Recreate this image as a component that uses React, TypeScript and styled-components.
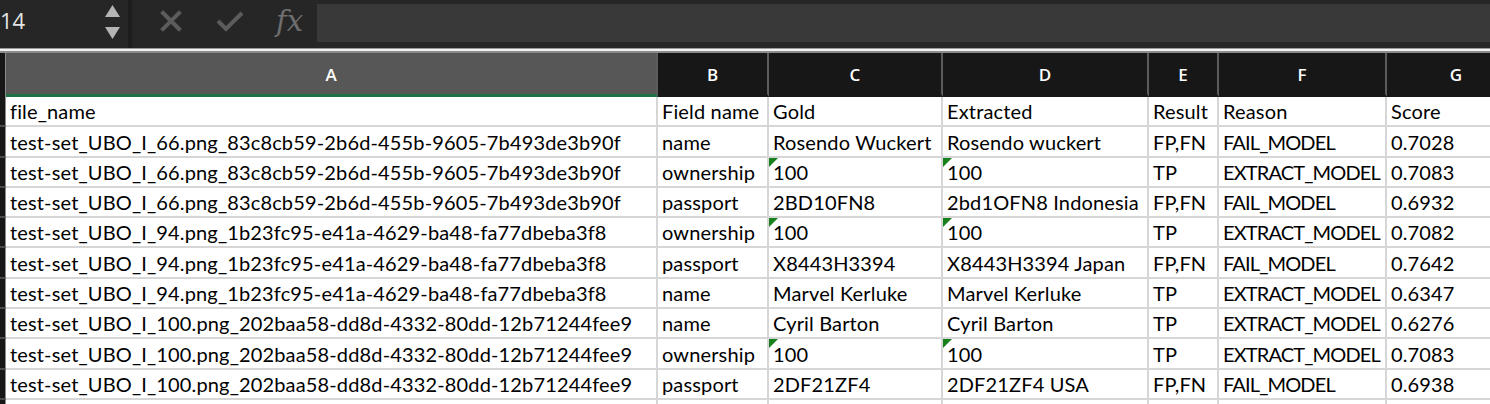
import React, { FC } from "react";
import styled, { createGlobalStyle } from "styled-components";

const GlobalStyle = createGlobalStyle`
  body {
    margin: 0;
    background: #ffffff;
    overflow: hidden;
  }
`;

const Page = styled.div`
  width: 1490px;
  height: 404px;
  overflow: hidden;
  display: flex;
  flex-direction: column;
`;

const Toolbar = styled.div`
  display: flex;
  height: 48px;
  background: #262626;
  flex-shrink: 0;
`;

const NameBox = styled.div`
  width: 128px;
  display: flex;
  align-items: center;
  justify-content: space-between;
  padding-right: 8px;
  box-sizing: border-box;
`;

const NameText = styled.span`
  font-family: "Open Sans", "Liberation Sans", sans-serif;
  font-size: 22px;
  color: #e4e4e4;
  margin-top: -8px;
`;

const Spinner = styled.div`
  display: flex;
  flex-direction: column;
  gap: 10px;
  margin-top: -4px;
`;

const Divider = styled.div`
  width: 4px;
  background: #1d1d1d;
`;

const ActionGroup = styled.div`
  display: flex;
  align-items: center;
  gap: 34px;
  padding: 0 14px 6px 28px;
`;

const FxLabel = styled.span`
  font-family: "DejaVu Serif", "Liberation Serif", serif;
  font-style: italic;
  font-size: 29px;
  color: #6e6e6e;
  margin-left: -2px;
`;

const FormulaInput = styled.div`
  flex: 1;
  margin: 4px 0 6px;
  background: #393939;
`;

const Rule = styled.div`
  height: 5px;
  flex-shrink: 0;
  background: linear-gradient(
    #9a9a9a 0,
    #9a9a9a 1px,
    #f2f2f2 1px,
    #f2f2f2 3px,
    #8c8c8c 3px
  );
`;

const columns = "6px 652px 111px 174px 206px 70px 168px 140px";

const HeaderRow = styled.div`
  display: grid;
  grid-template-columns: ${columns};
  height: 44px;
  flex-shrink: 0;
  background: #171717;
`;

const HeaderCell = styled.div<{ $selected?: boolean }>`
  display: flex;
  align-items: center;
  justify-content: center;
  box-sizing: border-box;
  border-right: 2px solid #5c5c5c;
  background: ${(p) => (p.$selected ? "#575757" : "#171717")};
  border-bottom: 3px solid ${(p) => (p.$selected ? "#1e7145" : "#171717")};
  color: #ffffff;
  font-family: "Open Sans", "Liberation Sans", sans-serif;
  font-weight: 600;
  font-size: 17px;
  padding-top: 2px;
`;

const Corner = styled.div`
  background: #171717;
  border-right: 1px solid #8a8a8a;
`;

const Row = styled.div`
  display: grid;
  grid-template-columns: ${columns};
  height: 30.3px;
  flex-shrink: 0;
`;

const RowHead = styled.div`
  background: #171717;
  box-sizing: border-box;
  border-bottom: 2px solid #4a4a4a;
  border-right: 1px solid #8a8a8a;
`;

const Cell = styled.div<{ $flag?: boolean; $caps?: boolean }>`
  position: relative;
  box-sizing: border-box;
  border-right: 2px solid #d6d6d6;
  border-bottom: 2px solid #d6d6d6;
  padding: 0 0 2px 4px;
  display: flex;
  align-items: flex-end;
  white-space: nowrap;
  overflow: hidden;
  font-family: Lato, "Liberation Sans", sans-serif;
  font-size: 20px;
  letter-spacing: ${(p) => (p.$caps ? "-0.85px" : "0.15px")};
  color: #000000;

  &::before {
    content: "";
    display: ${(p) => (p.$flag ? "block" : "none")};
    position: absolute;
    left: 0;
    top: 0;
    border-top: 9px solid #17801a;
    border-right: 9px solid transparent;
  }
`;

type Line = [string, string, string, string, string, string, string];

const f66 = "test-set_UBO_I_66.png_83c8cb59-2b6d-455b-9605-7b493de3b90f";
const f94 = "test-set_UBO_I_94.png_1b23fc95-e41a-4629-ba48-fa77dbeba3f8";
const f100 = "test-set_UBO_I_100.png_202baa58-dd8d-4332-80dd-12b71244fee9";

const lines: Line[] = [
  ["file_name", "Field name", "Gold", "Extracted", "Result", "Reason", "Score"],
  [f66, "name", "Rosendo Wuckert", "Rosendo wuckert", "FP,FN", "FAIL_MODEL", "0.7028"],
  [f66, "ownership", "100", "100", "TP", "EXTRACT_MODEL", "0.7083"],
  [f66, "passport", "2BD10FN8", "2bd1OFN8 Indonesia", "FP,FN", "FAIL_MODEL", "0.6932"],
  [f94, "ownership", "100", "100", "TP", "EXTRACT_MODEL", "0.7082"],
  [f94, "passport", "X8443H3394", "X8443H3394 Japan", "FP,FN", "FAIL_MODEL", "0.7642"],
  [f94, "name", "Marvel Kerluke", "Marvel Kerluke", "TP", "EXTRACT_MODEL", "0.6347"],
  [f100, "name", "Cyril Barton", "Cyril Barton", "TP", "EXTRACT_MODEL", "0.6276"],
  [f100, "ownership", "100", "100", "TP", "EXTRACT_MODEL", "0.7083"],
  [f100, "passport", "2DF21ZF4", "2DF21ZF4 USA", "FP,FN", "FAIL_MODEL", "0.6938"],
  ["", "", "", "", "", "", ""],
];

const letters = ["A", "B", "C", "D", "E", "F", "G"];

// numbers stored as text get the little green corner
const isFlagged = (line: Line, col: number): boolean =>
  (col === 2 || col === 3) && line[1] === "ownership";

const App: FC = () => {
  return (
    <Page>
      <GlobalStyle />
      <Toolbar>
        <NameBox>
          <NameText>14</NameText>
          <Spinner>
            <svg width="15" height="12" viewBox="0 0 15 12">
              <path d="M7.5 0 L15 12 L0 12 Z" fill="#b4b4b4" />
            </svg>
            <svg width="15" height="12" viewBox="0 0 15 12">
              <path d="M0 0 L15 0 L7.5 12 Z" fill="#b4b4b4" />
            </svg>
          </Spinner>
        </NameBox>
        <Divider />
        <ActionGroup>
          <svg width="22" height="22" viewBox="0 0 22 22">
            <path
              d="M3 3 L19 19 M19 3 L3 19"
              stroke="#5c5c5c"
              strokeWidth="4"
              strokeLinecap="square"
            />
          </svg>
          <svg width="28" height="22" viewBox="0 0 28 22">
            <path
              d="M2 11 L10 19 L26 3"
              stroke="#5c5c5c"
              strokeWidth="4"
              fill="none"
            />
          </svg>
          <FxLabel>fx</FxLabel>
        </ActionGroup>
        <FormulaInput />
      </Toolbar>
      <Rule />
      <HeaderRow>
        <Corner />
        {letters.map((l) => (
          <HeaderCell key={l} $selected={l === "A"}>
            {l}
          </HeaderCell>
        ))}
      </HeaderRow>
      {lines.map((line, i) => (
        <Row key={i}>
          <RowHead />
          {line.map((v, j) => (
            <Cell key={j} $flag={isFlagged(line, j)} $caps={j === 5 && i > 0}>
              {v}
            </Cell>
          ))}
        </Row>
      ))}
    </Page>
  );
};

export default App;
